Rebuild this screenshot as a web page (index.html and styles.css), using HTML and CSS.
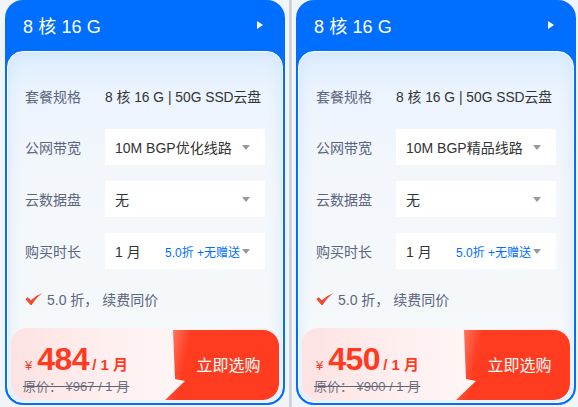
FILE: index.html
```html
<!DOCTYPE html>
<html lang="zh-CN">
<head>
<meta charset="utf-8">
<title>套餐</title>
<link rel="stylesheet" href="styles.css">
</head>
<body>
<div class="wrap">
  <div class="card">
    <div class="card-head">
      <span class="title">8 核 16 G</span>
      <span class="head-arrow"></span>
    </div>
    <div class="panel">
      <div class="row row-spec">
        <span class="label">套餐规格</span>
        <span class="value">8 核 16 G | 50G SSD云盘</span>
      </div>
      <div class="row">
        <span class="label">公网带宽</span>
        <div class="select"><span class="sel-text">10M BGP优化线路</span><span class="caret"></span></div>
      </div>
      <div class="row">
        <span class="label">云数据盘</span>
        <div class="select"><span class="sel-text">无</span><span class="caret"></span></div>
      </div>
      <div class="row">
        <span class="label">购买时长</span>
        <div class="select"><span class="sel-text">1 月</span><span class="sel-extra">5.0折 +无赠送</span><span class="caret tight"></span></div>
      </div>
      <div class="note">
        <svg class="check" width="18" height="12" viewBox="0 0 18 12"><path d="M0.4 5.9 L2.6 4.3 L5.9 7.3 Q10.6 2.7 17.6 0.1 Q11.6 4.3 6.7 11.9 L5.5 11.9 Z" fill="#f2492f"/></svg>
        <span>5.0 折，&nbsp;续费同价</span>
      </div>
      <div class="price-box">
        <div class="price">
          <div class="now"><span class="yen">¥</span><span class="num">484</span><span class="unit">/ 1 月</span></div>
          <div class="old">原价： ¥967 / 1 月</div>
        </div>
        <div class="buy">立即选购</div>
      </div>
    </div>
  </div>
  <div class="divider"></div>
  <div class="card">
    <div class="card-head">
      <span class="title">8 核 16 G</span>
      <span class="head-arrow"></span>
    </div>
    <div class="panel">
      <div class="row row-spec">
        <span class="label">套餐规格</span>
        <span class="value">8 核 16 G | 50G SSD云盘</span>
      </div>
      <div class="row">
        <span class="label">公网带宽</span>
        <div class="select"><span class="sel-text">10M BGP精品线路</span><span class="caret"></span></div>
      </div>
      <div class="row">
        <span class="label">云数据盘</span>
        <div class="select"><span class="sel-text">无</span><span class="caret"></span></div>
      </div>
      <div class="row">
        <span class="label">购买时长</span>
        <div class="select"><span class="sel-text">1 月</span><span class="sel-extra">5.0折 +无赠送</span><span class="caret tight"></span></div>
      </div>
      <div class="note">
        <svg class="check" width="18" height="12" viewBox="0 0 18 12"><path d="M0.4 5.9 L2.6 4.3 L5.9 7.3 Q10.6 2.7 17.6 0.1 Q11.6 4.3 6.7 11.9 L5.5 11.9 Z" fill="#f2492f"/></svg>
        <span>5.0 折，&nbsp;续费同价</span>
      </div>
      <div class="price-box">
        <div class="price">
          <div class="now"><span class="yen">¥</span><span class="num">450</span><span class="unit">/ 1 月</span></div>
          <div class="old">原价： ¥900 / 1 月</div>
        </div>
        <div class="buy">立即选购</div>
      </div>
    </div>
  </div>
</div>
</body>
</html>
```

FILE: styles.css
```css
* { box-sizing: border-box; }
html, body { margin: 0; padding: 0; }
body {
  width: 578px;
  height: 407px;
  overflow: hidden;
  background: #f1f4f8;
  font-family: "Liberation Sans", "Noto Sans CJK SC", sans-serif;
}
.wrap {
  display: flex;
  align-items: flex-start;
  padding-left: 5px;
}
.card {
  width: 280px;
  height: 405px;
  background: #006eff;
  border-radius: 18px;
  padding: 0 2px 2px;
  display: flex;
  flex-direction: column;
  flex-shrink: 0;
}
.divider {
  width: 3px;
  height: 407px;
  margin: 0 4px 0 4px;
  background: linear-gradient(to right, #d3d6db, #c9cdd3, #dfe2e6);
  flex-shrink: 0;
}
.card-head {
  height: 51px;
  display: flex;
  align-items: center;
  justify-content: space-between;
  padding: 0 20px 1px 16px;
  color: #fff;
}
.title {
  font-size: 18px;
  letter-spacing: 0.1px;
}
.head-arrow {
  width: 0;
  height: 0;
  border-top: 4px solid transparent;
  border-bottom: 4px solid transparent;
  border-left: 6px solid #fff;
}
.panel {
  flex: 1;
  border: 1px solid #fff;
  border-radius: 16px;
  background: linear-gradient(180deg, #ddedff 0%, #ecf4fe 12%, #f3f7fb 35%, #f5f8fb 70%, #f9fbfe 100%);
  box-shadow: inset 0 0 14px rgba(205, 228, 255, 0.9);
  padding: 26px 17px 2px;
  display: flex;
  flex-direction: column;
}
.row {
  display: flex;
  align-items: center;
  height: 36px;
  margin-bottom: 16px;
}
.row-spec {
  margin-bottom: 15px;
}
.label {
  width: 80px;
  flex-shrink: 0;
  font-size: 14px;
  color: #5b6580;
}
.value {
  font-size: 13.8px;
  color: #333;
  white-space: nowrap;
}
.select {
  flex: 1;
  height: 36px;
  background: #fff;
  display: flex;
  align-items: center;
  padding: 0 15px 0 10px;
}
.sel-text {
  font-size: 14px;
  color: #333;
  flex: 1;
}
.sel-extra {
  font-size: 12px;
  color: #006eff;
  margin-right: 2px;
}
.caret {
  width: 0;
  height: 0;
  border-left: 4px solid transparent;
  border-right: 4px solid transparent;
  border-top: 5px solid #9a9a9a;
  margin-top: 1px;
}
.note {
  display: flex;
  align-items: center;
  height: 20px;
  margin-top: 4px;
  padding-left: 0;
  font-size: 14px;
  color: #5b6580;
}
.check {
  margin-right: 4px;
  margin-top: 0;
}
.price-box {
  margin: 19px -14px 0;
  height: 72px;
  border-radius: 16px;
  background: linear-gradient(90deg, #fde2e2 0%, #fff0f0 40%, #fff7f7 70%, #fde9e9 100%);
  display: flex;
  overflow: hidden;
}
.price {
  flex: 1;
  padding: 13px 0 0 13px;
}
.now {
  display: flex;
  align-items: baseline;
  color: #ff3b1f;
  font-weight: bold;
  height: 36px;
  padding-left: 1px;
}
.yen {
  font-size: 13px;
  font-weight: normal;
  margin-right: 5px;
}
.num {
  font-size: 32px;
  letter-spacing: -0.5px;
  margin-right: 3px;
}
.unit {
  font-size: 15px;
}
.old {
  font-size: 13px;
  color: #6b7180;
  text-decoration: line-through;
  text-decoration-color: #5c6273;
  white-space: nowrap;
  margin-top: -1px;
  margin-left: -1px;
}
.buy {
  width: 117px;
  flex-shrink: 0;
  margin-top: 2px;
  border-radius: 0 16px 16px 0;
  background: linear-gradient(103deg, #ff9080 0px, #ff6a55 14px, #ff4a30 24px, #ff3b20 30px);
  clip-path: polygon(11px 0, 100% 0, 100% 100%, 3px 100%, 23px 51px, 13px 49px);
  color: #fff;
  font-size: 16px;
  display: flex;
  align-items: center;
  justify-content: center;
  padding-left: 16px;
  padding-bottom: 2px;
}
```
